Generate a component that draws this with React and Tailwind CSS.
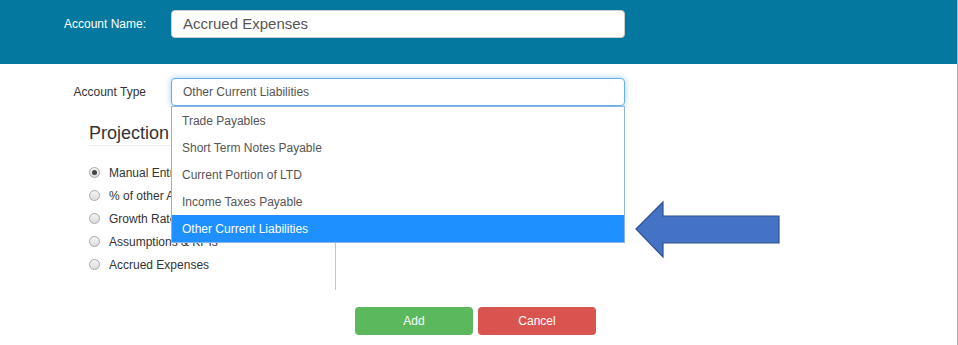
const OPTIONS = [
  'Trade Payables',
  'Short Term Notes Payable',
  'Current Portion of LTD',
  'Income Taxes Payable',
  'Other Current Liabilities',
];

const METHODS = [
  { label: 'Manual Entry', checked: true },
  { label: '% of other Account' },
  { label: 'Growth Rate' },
  { label: 'Assumptions & KPIs' },
  { label: 'Accrued Expenses' },
];

const Radio = ({ checked }) => (
  <span className="relative flex h-[11px] w-[11px] shrink-0 items-center justify-center rounded-full border border-[#a9a9a9] bg-gradient-to-b from-[#f4f4f4] to-[#dcdcdc]">
    {checked && <span className="h-[5px] w-[5px] rounded-full bg-[#444]" />}
  </span>
);

const Arrow = () => (
  <svg
    className="absolute left-[635px] top-[200px]"
    width="146"
    height="59"
    viewBox="0 0 146 59"
  >
    <polygon
      points="1,29 28,2 28,16 144,16 144,43 28,43 28,57"
      fill="#4472c4"
      stroke="#2f528f"
      strokeWidth="1.2"
    />
  </svg>
);

export default function App() {
  return (
    <div className="relative h-[345px] w-[958px] overflow-hidden border-r border-[#b4b4b4] bg-white font-['Liberation_Sans',Arial,sans-serif]">
      {/* Header */}
      <div className="flex h-16 items-start bg-[#04789f] pt-[10px]">
        <div className="flex h-[28px] w-[146px] items-center justify-end text-[12px] text-white">
          Account Name:
        </div>
        <div className="ml-[25px] flex h-[28px] w-[454px] items-center rounded-[4px] border border-[#ccc] bg-white pl-[11px] text-[15px] text-[#555]">
          Accrued Expenses
        </div>
      </div>

      {/* Account type */}
      <div className="mt-[14px] flex h-[28px] items-center">
        <div className="w-[146px] text-right text-[12px] text-[#333]">Account Type</div>
        <div className="relative ml-[25px] w-[454px]">
          <div className="flex h-[28px] items-center rounded-[4px] border border-[#66afe9] bg-white pl-[11px] text-[12px] text-[#555] shadow-[0_0_6px_rgba(102,175,233,0.6)]">
            Other Current Liabilities
          </div>
          <ul className="absolute left-0 top-full z-10 w-full border border-[#8db4ea] bg-white">
            {OPTIONS.map((opt, i) => (
              <li
                key={opt}
                className={`flex h-[27px] items-center pl-[10px] text-[12px] ${
                  i === OPTIONS.length - 1 ? 'bg-[#1e90ff] text-white' : 'text-[#555]'
                }`}
              >
                {opt}
              </li>
            ))}
          </ul>
        </div>
      </div>

      {/* Projection */}
      <div className="flex pl-[89px]">
        <div className="w-[247px] border-r border-[#c4c4c4] pb-[14px]">
          <h3 className="mt-[17px] border-b border-[#eee] pb-[2px] text-[18px] leading-[20px] text-[#333]">
            Projection Method
          </h3>
          <div className="mt-[15px]">
            {METHODS.map((m) => (
              <div key={m.label} className="flex h-[23px] items-center">
                <Radio checked={m.checked} />
                <span className="ml-[9px] text-[12px] text-[#333]">{m.label}</span>
              </div>
            ))}
          </div>
        </div>
      </div>

      {/* Buttons */}
      <div className="ml-[355px] mt-[17px] flex gap-[5px]">
        <button className="h-[28px] w-[118px] rounded-[4px] bg-[#5cb85c] text-[12px] text-white">
          Add
        </button>
        <button className="h-[28px] w-[118px] rounded-[4px] bg-[#d9534f] text-[12px] text-white">
          Cancel
        </button>
      </div>

      <Arrow />
    </div>
  );
}
